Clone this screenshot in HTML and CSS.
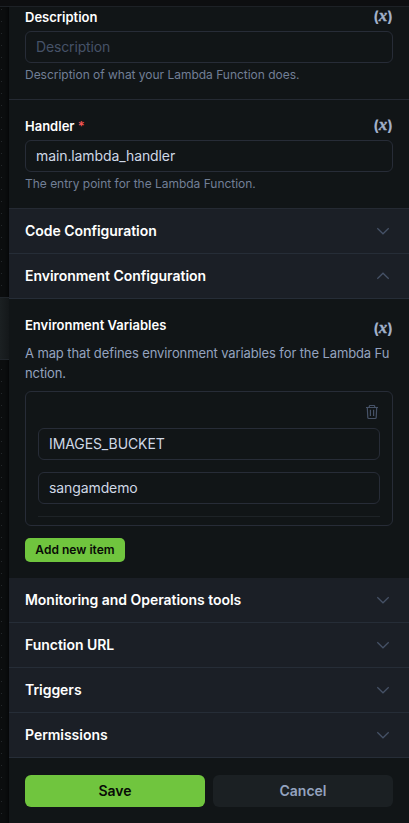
FILE: index.html
```html
<!DOCTYPE html>
<html lang="en">
<head>
<meta charset="utf-8">
<title>Lambda Function</title>
<link rel="stylesheet" href="styles.css">
</head>
<body>
<svg class="defs" width="0" height="0" aria-hidden="true">
  <symbol id="chevron" viewBox="0 0 14 14"><path d="M1.3 4.3 7 9.8l5.7-5.5" fill="none" stroke="currentColor" stroke-width="1.2"/></symbol>
</svg>
<div class="topbar"></div>
<div class="layout">
  <aside class="canvas"><div class="node"></div></aside>
  <main class="panel">
    <section class="field first">
      <div class="label-row"><label class="label">Description</label><span class="expr">(<i>x</i>)</span></div>
      <div class="input placeholder">Description</div>
      <p class="help">Description of what your Lambda Function does.</p>
    </section>
    <section class="field">
      <div class="label-row"><label class="label">Handler <span class="required">*</span></label><span class="expr">(<i>x</i>)</span></div>
      <div class="input">main.lambda_handler</div>
      <p class="help">The entry point for the Lambda Function.</p>
    </section>
    <div class="group"><span>Code Configuration</span><svg class="chevron"><use href="#chevron"/></svg></div>
    <div class="group"><span>Environment Configuration</span><svg class="chevron up"><use href="#chevron"/></svg></div>
    <section class="env">
      <div class="env-head"><span class="label">Environment Variables</span><span class="expr">(<i>x</i>)</span></div>
      <p class="env-text">A map that defines environment variables for the Lambda Function.</p>
      <div class="card">
        <div class="card-tools">
          <svg class="trash" viewBox="0 0 14 16" fill="none" stroke="currentColor" stroke-width="1.2"><path d="M1 3.5h12M4.3 3.5V2.3q0-.8.8-.8h3.8q.8 0 .8.8v1.2M2.3 3.5l.5 10q.1 1 1 1h6.4q.9 0 1-1l.5-10M5.4 5.8v6.2M8.6 5.8v6.2"/></svg>
        </div>
        <div class="input">IMAGES_BUCKET</div>
        <div class="input">sangamdemo</div>
        <div class="rule"></div>
      </div>
      <button class="add">Add new item</button>
    </section>
    <div class="group"><span>Monitoring and Operations tools</span><svg class="chevron"><use href="#chevron"/></svg></div>
    <div class="group"><span>Function URL</span><svg class="chevron"><use href="#chevron"/></svg></div>
    <div class="group"><span>Triggers</span><svg class="chevron"><use href="#chevron"/></svg></div>
    <div class="group"><span>Permissions</span><svg class="chevron"><use href="#chevron"/></svg></div>
    <footer class="actions">
      <button class="button save">Save</button>
      <button class="button cancel">Cancel</button>
    </footer>
  </main>
</div>
</body>
</html>
```
FILE: styles.css
```css
* { box-sizing: border-box; }
body {
  margin: 0;
  height: 823px;
  overflow: hidden;
  background: #0c0e0f;
  font-family: Inter, "Liberation Sans", sans-serif;
  color: #cfd8e6;
}
p { margin: 0; }
button { border: 0; padding: 0; font-family: inherit; font-weight: 600; }
.defs { display: block; }
.topbar { height: 7px; background: #0d0e10; border-bottom: 1px solid #1d2126; }
.layout { display: flex; height: 816px; }
.canvas {
  width: 9px;
  padding-top: 290px;
  background: radial-gradient(circle at 1.5px 2.5px, #24282b 0.7px, transparent 1px) 0 0 / 12px 12px #0b0d0e;
  box-shadow: inset -3px 0 3px -2px #050607;
}
.node { height: 63px; background: linear-gradient(90deg, #1b2022, #14181a); border: solid #20252a; border-width: 1px 0; }
.panel { width: 400px; background: #111517; }

.field { height: 109px; padding: 16px 16px 0; border-bottom: 1px solid #252a33; }
.field.first { height: 93px; padding-top: 0; }
.label-row { display: flex; justify-content: space-between; height: 24px; }
.label { font-size: 13px; line-height: 20px; font-weight: 600; color: #fff; }
.required { color: #f35454; }
.expr {
  display: flex;
  align-items: center;
  height: 20px;
  margin: -1px 0 0;
  font-size: 15px;
  font-weight: 700;
  color: #a1b0c9;
}
.expr i {
  margin-top: -1px;
  font: italic bold 17px/16px "Liberation Serif", serif;
  -webkit-text-stroke: 0.4px currentColor;
}
.input {
  height: 32px;
  padding: 0 10px;
  border: 1px solid #272c37;
  border-radius: 6px;
  font-size: 14px;
  line-height: 30px;
  letter-spacing: -0.1px;
}
.placeholder { color: #465267; letter-spacing: -0.15px; }
.help { margin-top: 3px; font-size: 12px; line-height: 18px; letter-spacing: -0.02px; color: #717f96; }

.group {
  display: flex;
  align-items: center;
  justify-content: space-between;
  height: 45px;
  padding: 0 19px 0 16px;
  background: #1b1f26;
  border-bottom: 1px solid #262d37;
  font-size: 14px;
  font-weight: 600;
  letter-spacing: -0.04px;
  color: #fff;
}
.group span { padding-bottom: 2px; }
.chevron { width: 14px; height: 14px; color: #465267; }
.up { transform: rotate(180deg); }

.env { height: 279px; padding: 16px 16px 0; }
.env-head { display: flex; justify-content: space-between; height: 28px; }
.env-head .expr { margin-top: 3px; }
.env-text { font-size: 13px; line-height: 20px; letter-spacing: -0.11px; color: #94a3bf; word-break: break-all; }
.card { height: 135px; margin-top: 8px; padding: 12px; border: 1px solid #272c37; border-radius: 6px; }
.card-tools { display: flex; justify-content: flex-end; height: 24px; padding-right: 1px; }
.trash { width: 14px; height: 16px; color: #465267; }
.card .input + .input { margin-top: 12px; }
.rule { height: 1px; margin-top: 12px; background: #1e2327; }
.add { display: block; width: 100px; height: 24px; margin-top: 12px; padding-bottom: 2px; border-radius: 5px; background: #70c53e; color: #080b06; font-size: 12px; letter-spacing: 0.02px; }

.actions { display: flex; gap: 8px; height: 65px; padding: 17px 16px 0; }
.button { flex: 1; height: 32px; padding-bottom: 2px; border-radius: 6px; font-size: 14px; }
.save { background: #70c53e; color: #080b06; }
.cancel { background: #1b2023; color: #94a3bf; }
```
